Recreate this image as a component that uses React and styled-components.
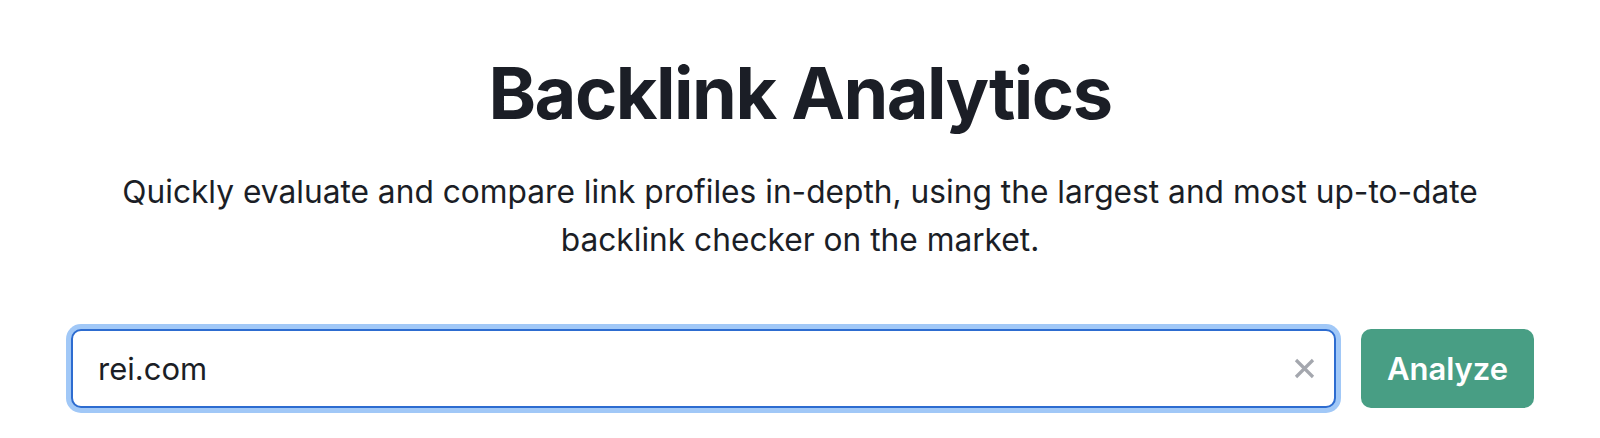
import React from "react";
import { styled, createGlobalStyle } from "styled-components";

const GlobalStyle = createGlobalStyle`
    body {
        margin: 0;
        background: #ffffff;
        font-family: Inter, "Noto Sans", sans-serif;
        color: #1b1e26;
    }
`;

function App() {
    return (
        <>
            <GlobalStyle />
            <Container>
                <Heading>Backlink Analytics</Heading>
                <Paragraph>
                    Quickly evaluate and compare link profiles in-depth, using
                    the largest and most up-to-date backlink checker on the
                    market.
                </Paragraph>
                <SearchRow>
                    <InputBox>
                        <Input defaultValue="rei.com" />
                        <ClearButton aria-label="clear">
                            <svg width="21" height="21" viewBox="0 0 21 21">
                                <path
                                    d="M2 2 L19 19 M19 2 L2 19"
                                    stroke="#a4a7ae"
                                    strokeWidth="3.2"
                                />
                            </svg>
                        </ClearButton>
                    </InputBox>
                    <AnalyzeButton>Analyze</AnalyzeButton>
                </SearchRow>
            </Container>
        </>
    );
}

export default App;

const Container = styled.div`
    padding: 50px 0 30px 0;
    min-height: 100vh;
    box-sizing: border-box;
    display: flex;
    flex-direction: column;
    align-items: center;
`;
const Heading = styled.h1`
    margin: 0;
    font-size: 72px;
    line-height: 86px;
    font-weight: 700;
    letter-spacing: -1.5px;
    color: #1b1e26;
`;
const Paragraph = styled.p`
    margin: 32px 0 0 0;
    max-width: 1420px;
    font-size: 31.7px;
    line-height: 48px;
    text-align: center;
    color: #1b1e26;
`;
const SearchRow = styled.div`
    margin-top: 65px;
    width: 1463px;
    display: flex;
    gap: 25px;
    padding-left: 5px;
`;
const InputBox = styled.div`
    flex: 1;
    height: 79px;
    box-sizing: border-box;
    display: flex;
    align-items: center;
    border: 2px solid #2d6cd0;
    border-radius: 10px;
    box-shadow: 0 0 0 5px #a1c8f7;
    padding: 0 19px 0 25px;
    background: #fff;
`;
const Input = styled.input`
    flex: 1;
    border: none;
    outline: none;
    background: transparent;
    font-family: Inter, "Noto Sans", sans-serif;
    font-size: 31px;
    color: #1b1e26;
    padding: 0;
`;
const ClearButton = styled.button`
    border: none;
    background: none;
    padding: 0;
    display: flex;
    cursor: pointer;
`;
const AnalyzeButton = styled.button`
    width: 173px;
    height: 79px;
    border: none;
    border-radius: 10px;
    background: #489e84;
    color: #ffffff;
    font-family: Inter, "Noto Sans", sans-serif;
    font-size: 31px;
    font-weight: 600;
    cursor: pointer;
`;
